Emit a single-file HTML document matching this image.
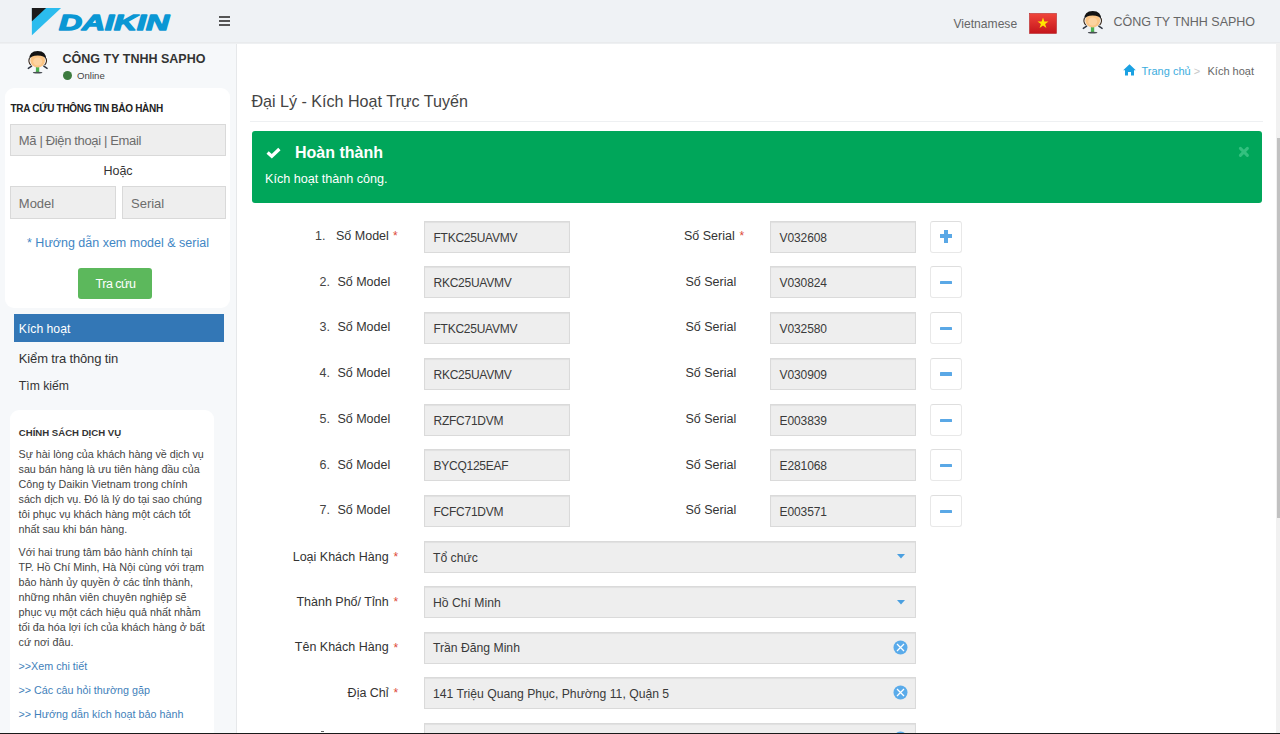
<!DOCTYPE html>
<html><head><meta charset="utf-8">
<style>
*{box-sizing:border-box;margin:0;padding:0}
html,body{width:1280px;height:734px;overflow:hidden;background:#fff;font-family:"Liberation Sans",sans-serif;color:#333}
.t{position:absolute;white-space:nowrap}
.r{position:absolute}
</style></head><body>
<div class="r" style="left:0px;top:0px;width:1280px;height:42px;background:#eff2f5"></div>
<div class="r" style="left:0px;top:42px;width:1280px;height:1px;background:#e9ebed"></div>
<div class="r" style="left:0px;top:43px;width:1280px;height:1px;background:#eef0f2"></div>
<div class="r" style="left:0px;top:44px;width:236px;height:690px;background:#f6f8fa"></div>
<div class="r" style="left:236px;top:44px;width:1px;height:690px;background:#e6e8ea"></div>
<div class="r" style="left:237px;top:44px;width:1039px;height:690px;background:#fff"></div>
<div class="r" style="left:1276px;top:43px;width:4px;height:691px;background:#f1f1f1"></div>
<div class="r" style="left:1277px;top:138px;width:3px;height:380px;background:#c1c1c1"></div>
<svg width="145" height="30" viewBox="0 0 145 30" style="position:absolute;left:30px;top:6px">
<polygon points="1.9,2 31.1,2 1.9,29.3" fill="#2bbcee"/>
<polygon points="1.9,2 16.1,2 1.9,15.2" fill="#1b1b1b"/>
<text x="29" y="24.25" font-family="Liberation Sans" font-weight="700" font-style="italic" font-size="22.3" fill="#0a97d4" stroke="#0a97d4" stroke-width="1.4" stroke-linejoin="round" textLength="110" lengthAdjust="spacingAndGlyphs">DAIKIN</text>
</svg>
<div class="r" style="left:219px;top:16px;width:11px;height:2px;background:#555"></div>
<div class="r" style="left:219px;top:20px;width:11px;height:2px;background:#555"></div>
<div class="r" style="left:219px;top:24px;width:11px;height:2px;background:#555"></div>
<div class="t" style="font-size:12.1px;line-height:12.1px;top:17.56px;color:#666;left:953.50px;">Vietnamese</div>
<svg width="28" height="21" viewBox="0 0 28 21" style="position:absolute;left:1029px;top:12.5px">
<defs><linearGradient id="fg" x1="0" y1="0" x2="0" y2="1"><stop offset="0" stop-color="#f0453a"/><stop offset="1" stop-color="#c4141b"/></linearGradient></defs>
<rect x="0.5" y="0.5" width="27" height="20" fill="url(#fg)" stroke="#b8282a" stroke-width="0.6"/>
<polygon points="14,4.6 15.35,8.6 19.5,8.6 16.1,11.1 17.4,15.1 14,12.6 10.6,15.1 11.9,11.1 8.5,8.6 12.65,8.6" fill="#ffe600"/>
</svg>
<svg width="30" height="32" viewBox="0 0 30 32" style="position:absolute;left:1078px;top:6px">
<path d="M5.3 22.4 L8.6 20.1 M24.1 22.4 L20.8 20.1" stroke="#2d3440" stroke-width="1.4" stroke-linecap="round"/>
<rect x="12.9" y="20.6" width="3.3" height="5.6" fill="#4db351"/>
<ellipse cx="14.6" cy="26.6" rx="4.8" ry="0.95" fill="#4a4f55"/>
<path d="M6.4 12.2 Q4.9 15.8 7.8 19.2 M23.0 12.2 Q24.5 15.8 21.6 19.2" stroke="#3b2a1c" stroke-width="1.1" fill="none"/>
<ellipse cx="14.7" cy="14.4" rx="7.4" ry="7.1" fill="#fbc585"/>
<ellipse cx="14.7" cy="15.5" rx="4.5" ry="4" fill="#fdd3a0"/>
<path d="M6.2 13.6 Q6.0 4.9 14.7 4.9 Q23.4 4.9 23.2 13.6 Q21.5 9.8 14.7 9.6 Q7.9 9.8 6.2 13.6Z" fill="#131313"/>
</svg>
<div class="t" style="font-size:12.5px;line-height:12.5px;top:15.62px;color:#666;left:1113.40px;">CÔNG TY TNHH SAPHO</div>
<svg width="30" height="32" viewBox="0 0 30 32" style="position:absolute;left:23.2px;top:46.2px">
<path d="M5.3 22.4 L8.6 20.1 M24.1 22.4 L20.8 20.1" stroke="#2d3440" stroke-width="1.4" stroke-linecap="round"/>
<rect x="12.9" y="20.6" width="3.3" height="5.6" fill="#4db351"/>
<ellipse cx="14.6" cy="26.6" rx="4.8" ry="0.95" fill="#4a4f55"/>
<path d="M6.4 12.2 Q4.9 15.8 7.8 19.2 M23.0 12.2 Q24.5 15.8 21.6 19.2" stroke="#3b2a1c" stroke-width="1.1" fill="none"/>
<ellipse cx="14.7" cy="14.4" rx="7.4" ry="7.1" fill="#fbc585"/>
<ellipse cx="14.7" cy="15.5" rx="4.5" ry="4" fill="#fdd3a0"/>
<path d="M6.2 13.6 Q6.0 4.9 14.7 4.9 Q23.4 4.9 23.2 13.6 Q21.5 9.8 14.7 9.6 Q7.9 9.8 6.2 13.6Z" fill="#131313"/>
</svg>
<div class="t" style="font-size:12.5px;line-height:12.5px;top:52.92px;color:#333;font-weight:700;left:62.60px;">CÔNG TY TNHH SAPHO</div>
<div class="r" style="left:63px;top:71px;width:9px;height:9px;background:#3d7b3f;border-radius:50%"></div>
<div class="t" style="font-size:9.6px;line-height:9.6px;top:70.67px;color:#444;left:77.00px;">Online</div>
<div class="r" style="left:5px;top:87.5px;width:225px;height:220.5px;background:#fff;border-radius:9px"></div>
<div class="t" style="font-size:10px;line-height:10px;top:103.83px;color:#222;font-weight:700;letter-spacing:-0.3px;left:10.50px;">TRA CỨU THÔNG TIN BẢO HÀNH</div>
<div class="r" style="left:10px;top:124px;width:216px;height:32px;background:#eee;border:1px solid #d9d9d9"></div>
<div class="t" style="font-size:13px;line-height:13px;top:133.70px;color:#6c6c6c;letter-spacing:-0.35px;left:18.80px;">Mã | Điện thoại | Email</div>
<div class="t" style="font-size:12.5px;line-height:12.5px;top:165.22px;color:#333;left:-182.00px;width:600px;text-align:center;">Hoặc</div>
<div class="r" style="left:10px;top:186px;width:106px;height:32.5px;background:#eee;border:1px solid #d9d9d9"></div>
<div class="r" style="left:122px;top:186px;width:104px;height:32.5px;background:#eee;border:1px solid #d9d9d9"></div>
<div class="t" style="font-size:13px;line-height:13px;top:196.50px;color:#6c6c6c;left:18.80px;">Model</div>
<div class="t" style="font-size:13px;line-height:13px;top:196.50px;color:#6c6c6c;left:131.00px;">Serial</div>
<div class="t" style="font-size:12.5px;line-height:12.5px;top:236.82px;color:#3f86c4;left:-182.00px;width:600px;text-align:center;">* Hướng dẫn xem model &amp; serial</div>
<div class="r" style="left:78px;top:268px;width:74px;height:31px;background:#5cb85c;border-radius:3px"></div>
<div class="t" style="font-size:12.5px;line-height:12.5px;top:278.42px;color:#fff;letter-spacing:-0.5px;left:-184.50px;width:600px;text-align:center;">Tra cứu</div>
<div class="r" style="left:14px;top:314px;width:210px;height:28.2px;background:#3377b6"></div>
<div class="t" style="font-size:12.2px;line-height:12.2px;top:323.07px;color:#fff;left:18.80px;">Kích hoạt</div>
<div class="t" style="font-size:13px;line-height:13px;top:351.90px;color:#333;letter-spacing:-0.15px;left:18.80px;">Kiểm tra thông tin</div>
<div class="t" style="font-size:12.2px;line-height:12.2px;top:380.17px;color:#333;left:18.80px;">Tìm kiếm</div>
<div class="r" style="left:10px;top:410px;width:203.8px;height:330px;background:#fff;border-radius:9px"></div>
<div class="t" style="font-size:9.6px;line-height:9.6px;top:428.17px;color:#333;font-weight:700;left:18.80px;">CHÍNH SÁCH DỊCH VỤ</div>
<div class="t" style="font-size:10.75px;line-height:10.75px;top:449.30px;color:#444;left:18.50px;">Sự hài lòng của khách hàng về dịch vụ</div>
<div class="t" style="font-size:10.75px;line-height:10.75px;top:464.30px;color:#444;left:18.50px;">sau bán hàng là ưu tiên hàng đầu của</div>
<div class="t" style="font-size:10.75px;line-height:10.75px;top:479.30px;color:#444;left:18.50px;">Công ty Daikin Vietnam trong chính</div>
<div class="t" style="font-size:10.75px;line-height:10.75px;top:494.30px;color:#444;left:18.50px;">sách dịch vụ. Đó là lý do tại sao chúng</div>
<div class="t" style="font-size:10.75px;line-height:10.75px;top:509.30px;color:#444;left:18.50px;">tôi phục vụ khách hàng một cách tốt</div>
<div class="t" style="font-size:10.75px;line-height:10.75px;top:524.30px;color:#444;left:18.50px;">nhất sau khi bán hàng.</div>
<div class="t" style="font-size:10.75px;line-height:10.75px;top:547.30px;color:#444;left:18.50px;">Với hai trung tâm bảo hành chính tại</div>
<div class="t" style="font-size:10.75px;line-height:10.75px;top:562.18px;color:#444;left:18.50px;">TP. Hồ Chí Minh, Hà Nội cùng với trạm</div>
<div class="t" style="font-size:10.75px;line-height:10.75px;top:577.06px;color:#444;left:18.50px;">bảo hành ủy quyền ở các tỉnh thành,</div>
<div class="t" style="font-size:10.75px;line-height:10.75px;top:591.94px;color:#444;left:18.50px;">những nhân viên chuyên nghiệp sẽ</div>
<div class="t" style="font-size:10.75px;line-height:10.75px;top:606.82px;color:#444;left:18.50px;">phục vụ một cách hiệu quả nhất nhằm</div>
<div class="t" style="font-size:10.75px;line-height:10.75px;top:621.70px;color:#444;left:18.50px;">tối đa hóa lợi ích của khách hàng ở bất</div>
<div class="t" style="font-size:10.75px;line-height:10.75px;top:636.58px;color:#444;left:18.50px;">cứ nơi đâu.</div>
<div class="t" style="font-size:10.75px;line-height:10.75px;top:661.30px;color:#3f7fba;left:18.50px;">&gt;&gt;Xem chi tiết</div>
<div class="t" style="font-size:10.75px;line-height:10.75px;top:684.70px;color:#3f7fba;left:18.50px;">&gt;&gt; Các câu hỏi thường gặp</div>
<div class="t" style="font-size:10.75px;line-height:10.75px;top:708.50px;color:#3f7fba;left:18.50px;">&gt;&gt; Hướng dẫn kích hoạt bảo hành</div>
<svg width="13" height="12" viewBox="0 0 13 12" style="position:absolute;left:1123px;top:64px">
<path d="M6.5 0.3 L12.8 6.3 L11 6.3 L11 11.6 L8 11.6 L8 8 L5 8 L5 11.6 L2 11.6 L2 6.3 L0.2 6.3Z" fill="#1ba1e2"/>
</svg>
<div class="t" style="font-size:11px;line-height:11px;top:65.69px;color:#3badde;left:1141.50px;">Trang chủ</div>
<div class="t" style="font-size:11px;line-height:11px;top:65.69px;color:#c8c8c8;left:1193.80px;">&gt;</div>
<div class="t" style="font-size:11px;line-height:11px;top:65.69px;color:#666;left:1207.50px;">Kích hoạt</div>
<div class="t" style="font-size:16.1px;line-height:16.1px;top:92.87px;color:#444;left:251.40px;">Đại Lý - Kích Hoạt Trực Tuyến</div>
<div class="r" style="left:250px;top:121px;width:1013px;height:1px;background:#eef0f2"></div>
<div class="r" style="left:251.5px;top:131px;width:1010.5px;height:71.5px;background:#00a65a;border-radius:3px"></div>
<svg width="16" height="12" viewBox="0 0 16 12" style="position:absolute;left:265.5px;top:147px">
<path d="M1.6 5.6 L5.8 9.3 L13.4 2.0" stroke="#fff" stroke-width="3.3" fill="none" stroke-linejoin="miter" stroke-linecap="butt"/>
</svg>
<div class="t" style="font-size:16px;line-height:16px;top:144.96px;color:#fff;font-weight:700;left:295.00px;">Hoàn thành</div>
<div class="t" style="font-size:12.6px;line-height:12.6px;top:173.33px;color:#fff;left:265.00px;">Kích hoạt thành công.</div>
<svg width="12" height="12" viewBox="0 0 12 12" style="position:absolute;left:1237.5px;top:145.8px">
<path d="M2.4 2.4 L9.4 9.4 M9.4 2.4 L2.4 9.4" stroke="#33c07f" stroke-width="3" stroke-linecap="round"/>
</svg>
<div class="t" style="font-size:12.5px;line-height:12.5px;top:229.82px;color:#444;left:315.00px;">1.</div>
<div class="t" style="font-size:12.5px;line-height:12.5px;top:229.82px;color:#333;right:891.20px;">Số Model</div>
<div class="t" style="font-size:12px;line-height:12px;top:230.24px;color:#dd4b39;left:393.00px;">*</div>
<div class="t" style="font-size:12.5px;line-height:12.5px;top:229.82px;color:#333;left:684.00px;">Số Serial</div>
<div class="t" style="font-size:12px;line-height:12px;top:230.24px;color:#dd4b39;left:739.50px;">*</div>
<div class="r" style="left:424px;top:221.1px;width:146px;height:31.8px;background:#eee;border:1px solid #dadada;box-shadow:inset 0 1px 1px rgba(0,0,0,.06)"></div>
<div class="r" style="left:770px;top:221.1px;width:146px;height:31.8px;background:#eee;border:1px solid #dadada;box-shadow:inset 0 1px 1px rgba(0,0,0,.06)"></div>
<div class="t" style="font-size:12px;line-height:12px;top:231.84px;color:#3a3a3a;letter-spacing:-0.25px;left:433.50px;">FTKC25UAVMV</div>
<div class="t" style="font-size:12px;line-height:12px;top:231.84px;color:#3a3a3a;letter-spacing:-0.1px;left:779.50px;">V032608</div>
<div class="r" style="left:930px;top:221.1px;width:31.5px;height:32px;background:#fff;border:1px solid #e8e8e8;border-top-color:#dedede;border-radius:3px"></div>
<div class="r" style="left:939.7px;top:234.3px;width:12.6px;height:3.8px;background:#5aa8e6"></div>
<div class="r" style="left:944.1px;top:230.2px;width:3.8px;height:12.6px;background:#5aa8e6"></div>
<div class="t" style="font-size:12.5px;line-height:12.5px;top:275.52px;color:#444;left:319.50px;">2.</div>
<div class="t" style="font-size:12.5px;line-height:12.5px;top:275.52px;color:#333;right:889.80px;">Số Model</div>
<div class="t" style="font-size:12.5px;line-height:12.5px;top:275.52px;color:#333;left:685.50px;">Số Serial</div>
<div class="r" style="left:424px;top:266.2px;width:146px;height:31.8px;background:#eee;border:1px solid #dadada;box-shadow:inset 0 1px 1px rgba(0,0,0,.06)"></div>
<div class="r" style="left:770px;top:266.2px;width:146px;height:31.8px;background:#eee;border:1px solid #dadada;box-shadow:inset 0 1px 1px rgba(0,0,0,.06)"></div>
<div class="t" style="font-size:12px;line-height:12px;top:276.94px;color:#3a3a3a;letter-spacing:-0.25px;left:433.50px;">RKC25UAVMV</div>
<div class="t" style="font-size:12px;line-height:12px;top:276.94px;color:#3a3a3a;letter-spacing:-0.1px;left:779.50px;">V030824</div>
<div class="r" style="left:930px;top:266.2px;width:31.5px;height:32px;background:#fff;border:1px solid #e8e8e8;border-top-color:#dedede;border-radius:3px"></div>
<div class="r" style="left:939.7px;top:280.8px;width:12.6px;height:3.4px;background:#5aa8e6;border-radius:0.5px"></div>
<div class="t" style="font-size:12.5px;line-height:12.5px;top:321.22px;color:#444;left:319.50px;">3.</div>
<div class="t" style="font-size:12.5px;line-height:12.5px;top:321.22px;color:#333;right:889.80px;">Số Model</div>
<div class="t" style="font-size:12.5px;line-height:12.5px;top:321.22px;color:#333;left:685.50px;">Số Serial</div>
<div class="r" style="left:424px;top:311.9px;width:146px;height:31.8px;background:#eee;border:1px solid #dadada;box-shadow:inset 0 1px 1px rgba(0,0,0,.06)"></div>
<div class="r" style="left:770px;top:311.9px;width:146px;height:31.8px;background:#eee;border:1px solid #dadada;box-shadow:inset 0 1px 1px rgba(0,0,0,.06)"></div>
<div class="t" style="font-size:12px;line-height:12px;top:322.64px;color:#3a3a3a;letter-spacing:-0.25px;left:433.50px;">FTKC25UAVMV</div>
<div class="t" style="font-size:12px;line-height:12px;top:322.64px;color:#3a3a3a;letter-spacing:-0.1px;left:779.50px;">V032580</div>
<div class="r" style="left:930px;top:311.9px;width:31.5px;height:32px;background:#fff;border:1px solid #e8e8e8;border-top-color:#dedede;border-radius:3px"></div>
<div class="r" style="left:939.7px;top:326.5px;width:12.6px;height:3.4px;background:#5aa8e6;border-radius:0.5px"></div>
<div class="t" style="font-size:12.5px;line-height:12.5px;top:367.12px;color:#444;left:319.50px;">4.</div>
<div class="t" style="font-size:12.5px;line-height:12.5px;top:367.12px;color:#333;right:889.80px;">Số Model</div>
<div class="t" style="font-size:12.5px;line-height:12.5px;top:367.12px;color:#333;left:685.50px;">Số Serial</div>
<div class="r" style="left:424px;top:357.8px;width:146px;height:31.8px;background:#eee;border:1px solid #dadada;box-shadow:inset 0 1px 1px rgba(0,0,0,.06)"></div>
<div class="r" style="left:770px;top:357.8px;width:146px;height:31.8px;background:#eee;border:1px solid #dadada;box-shadow:inset 0 1px 1px rgba(0,0,0,.06)"></div>
<div class="t" style="font-size:12px;line-height:12px;top:368.54px;color:#3a3a3a;letter-spacing:-0.25px;left:433.50px;">RKC25UAVMV</div>
<div class="t" style="font-size:12px;line-height:12px;top:368.54px;color:#3a3a3a;letter-spacing:-0.1px;left:779.50px;">V030909</div>
<div class="r" style="left:930px;top:357.8px;width:31.5px;height:32px;background:#fff;border:1px solid #e8e8e8;border-top-color:#dedede;border-radius:3px"></div>
<div class="r" style="left:939.7px;top:372.4px;width:12.6px;height:3.4px;background:#5aa8e6;border-radius:0.5px"></div>
<div class="t" style="font-size:12.5px;line-height:12.5px;top:413.32px;color:#444;left:319.50px;">5.</div>
<div class="t" style="font-size:12.5px;line-height:12.5px;top:413.32px;color:#333;right:889.80px;">Số Model</div>
<div class="t" style="font-size:12.5px;line-height:12.5px;top:413.32px;color:#333;left:685.50px;">Số Serial</div>
<div class="r" style="left:424px;top:404.0px;width:146px;height:31.8px;background:#eee;border:1px solid #dadada;box-shadow:inset 0 1px 1px rgba(0,0,0,.06)"></div>
<div class="r" style="left:770px;top:404.0px;width:146px;height:31.8px;background:#eee;border:1px solid #dadada;box-shadow:inset 0 1px 1px rgba(0,0,0,.06)"></div>
<div class="t" style="font-size:12px;line-height:12px;top:414.74px;color:#3a3a3a;letter-spacing:-0.25px;left:433.50px;">RZFC71DVM</div>
<div class="t" style="font-size:12px;line-height:12px;top:414.74px;color:#3a3a3a;letter-spacing:-0.1px;left:779.50px;">E003839</div>
<div class="r" style="left:930px;top:404.0px;width:31.5px;height:32px;background:#fff;border:1px solid #e8e8e8;border-top-color:#dedede;border-radius:3px"></div>
<div class="r" style="left:939.7px;top:418.6px;width:12.6px;height:3.4px;background:#5aa8e6;border-radius:0.5px"></div>
<div class="t" style="font-size:12.5px;line-height:12.5px;top:458.72px;color:#444;left:319.50px;">6.</div>
<div class="t" style="font-size:12.5px;line-height:12.5px;top:458.72px;color:#333;right:889.80px;">Số Model</div>
<div class="t" style="font-size:12.5px;line-height:12.5px;top:458.72px;color:#333;left:685.50px;">Số Serial</div>
<div class="r" style="left:424px;top:449.4px;width:146px;height:31.8px;background:#eee;border:1px solid #dadada;box-shadow:inset 0 1px 1px rgba(0,0,0,.06)"></div>
<div class="r" style="left:770px;top:449.4px;width:146px;height:31.8px;background:#eee;border:1px solid #dadada;box-shadow:inset 0 1px 1px rgba(0,0,0,.06)"></div>
<div class="t" style="font-size:12px;line-height:12px;top:460.14px;color:#3a3a3a;letter-spacing:-0.25px;left:433.50px;">BYCQ125EAF</div>
<div class="t" style="font-size:12px;line-height:12px;top:460.14px;color:#3a3a3a;letter-spacing:-0.1px;left:779.50px;">E281068</div>
<div class="r" style="left:930px;top:449.4px;width:31.5px;height:32px;background:#fff;border:1px solid #e8e8e8;border-top-color:#dedede;border-radius:3px"></div>
<div class="r" style="left:939.7px;top:464.0px;width:12.6px;height:3.4px;background:#5aa8e6;border-radius:0.5px"></div>
<div class="t" style="font-size:12.5px;line-height:12.5px;top:504.42px;color:#444;left:319.50px;">7.</div>
<div class="t" style="font-size:12.5px;line-height:12.5px;top:504.42px;color:#333;right:889.80px;">Số Model</div>
<div class="t" style="font-size:12.5px;line-height:12.5px;top:504.42px;color:#333;left:685.50px;">Số Serial</div>
<div class="r" style="left:424px;top:495.1px;width:146px;height:31.8px;background:#eee;border:1px solid #dadada;box-shadow:inset 0 1px 1px rgba(0,0,0,.06)"></div>
<div class="r" style="left:770px;top:495.1px;width:146px;height:31.8px;background:#eee;border:1px solid #dadada;box-shadow:inset 0 1px 1px rgba(0,0,0,.06)"></div>
<div class="t" style="font-size:12px;line-height:12px;top:505.84px;color:#3a3a3a;letter-spacing:-0.25px;left:433.50px;">FCFC71DVM</div>
<div class="t" style="font-size:12px;line-height:12px;top:505.84px;color:#3a3a3a;letter-spacing:-0.1px;left:779.50px;">E003571</div>
<div class="r" style="left:930px;top:495.1px;width:31.5px;height:32px;background:#fff;border:1px solid #e8e8e8;border-top-color:#dedede;border-radius:3px"></div>
<div class="r" style="left:939.7px;top:509.7px;width:12.6px;height:3.4px;background:#5aa8e6;border-radius:0.5px"></div>
<div class="t" style="font-size:12.5px;line-height:12.5px;top:550.62px;color:#333;right:891.40px;">Loại Khách Hàng</div>
<div class="t" style="font-size:12px;line-height:12px;top:551.04px;color:#dd4b39;left:393.50px;">*</div>
<div class="r" style="left:424px;top:541.1px;width:492px;height:31.8px;background:#eee;border:1px solid #dadada;box-shadow:inset 0 1px 1px rgba(0,0,0,.06)"></div>
<div class="t" style="font-size:12.2px;line-height:12.2px;top:551.77px;color:#3a3a3a;left:433.00px;">Tổ chức</div>
<svg width="8" height="5" viewBox="0 0 8 5" style="position:absolute;left:896.5px;top:554.30px"><polygon points="0,0 8,0 4,4.6" fill="#4a9fe0"/></svg>
<div class="t" style="font-size:12.5px;line-height:12.5px;top:595.82px;color:#333;right:891.40px;">Thành Phố/ Tỉnh</div>
<div class="t" style="font-size:12px;line-height:12px;top:596.24px;color:#dd4b39;left:393.50px;">*</div>
<div class="r" style="left:424px;top:586.3px;width:492px;height:31.8px;background:#eee;border:1px solid #dadada;box-shadow:inset 0 1px 1px rgba(0,0,0,.06)"></div>
<div class="t" style="font-size:12.2px;line-height:12.2px;top:596.97px;color:#3a3a3a;left:433.00px;">Hồ Chí Minh</div>
<svg width="8" height="5" viewBox="0 0 8 5" style="position:absolute;left:896.5px;top:599.50px"><polygon points="0,0 8,0 4,4.6" fill="#4a9fe0"/></svg>
<div class="t" style="font-size:12.5px;line-height:12.5px;top:641.32px;color:#333;right:891.40px;">Tên Khách Hàng</div>
<div class="t" style="font-size:12px;line-height:12px;top:641.74px;color:#dd4b39;left:393.50px;">*</div>
<div class="r" style="left:424px;top:631.8px;width:492px;height:31.8px;background:#eee;border:1px solid #dadada;box-shadow:inset 0 1px 1px rgba(0,0,0,.06)"></div>
<div class="t" style="font-size:12.2px;line-height:12.2px;top:642.47px;color:#3a3a3a;left:433.00px;">Trần Đăng Minh</div>
<svg width="15" height="15" viewBox="0 0 15 15" style="position:absolute;left:892.5px;top:639.80px"><circle cx="7.5" cy="7.5" r="7" fill="#5aabea"/><path d="M4.0 4.0 L11.0 11.0 M11.0 4.0 L4.0 11.0" stroke="#fff" stroke-width="1.25"/></svg>
<div class="t" style="font-size:12.5px;line-height:12.5px;top:686.52px;color:#333;right:891.40px;">Địa Chỉ</div>
<div class="t" style="font-size:12px;line-height:12px;top:686.94px;color:#dd4b39;left:393.50px;">*</div>
<div class="r" style="left:424px;top:677.0px;width:492px;height:31.8px;background:#eee;border:1px solid #dadada;box-shadow:inset 0 1px 1px rgba(0,0,0,.06)"></div>
<div class="t" style="font-size:12.2px;line-height:12.2px;top:687.67px;color:#3a3a3a;left:433.00px;">141 Triệu Quang Phục, Phường 11, Quận 5</div>
<svg width="15" height="15" viewBox="0 0 15 15" style="position:absolute;left:892.5px;top:685.00px"><circle cx="7.5" cy="7.5" r="7" fill="#5aabea"/><path d="M4.0 4.0 L11.0 11.0 M11.0 4.0 L4.0 11.0" stroke="#fff" stroke-width="1.25"/></svg>
<div class="r" style="left:424px;top:722.6px;width:492px;height:12px;background:#eee;border:1px solid #dadada;box-shadow:inset 0 1px 1px rgba(0,0,0,.06)"></div>
<div class="r" style="left:321px;top:731px;width:3px;height:1px;background:#666"></div>
<svg width="15" height="15" viewBox="0 0 15 15" style="position:absolute;left:892.5px;top:730.7px"><circle cx="7.5" cy="7.5" r="7" fill="#5aabea"/></svg>
<div class="r" style="left:0px;top:733px;width:1280px;height:1px;background:#1a1a1a"></div>
<div class="r" style="left:0px;top:733px;width:1280px;height:1px;background:#1a1a1a"></div>
</body></html>
